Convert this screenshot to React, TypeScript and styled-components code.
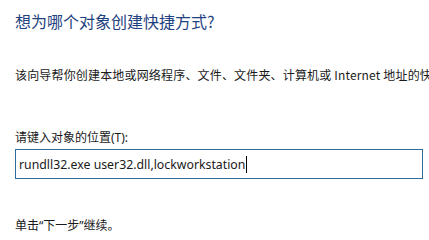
import styled, { createGlobalStyle } from "styled-components";

const GlobalStyle = createGlobalStyle`
  html, body {
    margin: 0;
    padding: 0;
    background: #ffffff;
  }
  body {
    font-family: "Noto Sans", "Noto Sans CJK SC", sans-serif;
  }
`;

const Page = styled.div`
  width: 429px;
  height: 234px;
  overflow: hidden;
  box-sizing: border-box;
  padding: 10px 6px 0 15px;
  display: flex;
  flex-direction: column;
`;

const Title = styled.h1`
  margin: 0;
  font-size: 16px;
  line-height: 22px;
  font-weight: normal;
  color: #1f4380;
  font-family: "Noto Sans CJK SC", sans-serif;
`;

const Intro = styled.p`
  margin: 35px 0 0;
  font-size: 12px;
  line-height: 16px;
  letter-spacing: 0.17px;
  color: #1a1a1a;
  white-space: nowrap;
  font-family: "Noto Sans CJK SC", sans-serif;
`;

const Field = styled.div`
  margin-top: 47px;
  display: flex;
  flex-direction: column;
  gap: 3px;
`;

const Label = styled.label`
  font-size: 12px;
  line-height: 16px;
  color: #1a1a1a;
  font-family: "Noto Sans", "Noto Sans CJK SC", sans-serif;
`;

const InputBox = styled.div`
  width: 408px;
  height: 30px;
  box-sizing: border-box;
  border: 1px solid #2f6e9a;
  display: flex;
  align-items: center;
  padding-left: 3px;
  font-size: 12.3px;
  color: #1a1a1a;
  font-family: "Noto Sans", sans-serif;
`;

const Caret = styled.span`
  display: inline-block;
  width: 1px;
  height: 17px;
  background: #000;
  margin-left: 1px;
`;

const Footer = styled.p`
  margin: 39px 0 0;
  font-size: 12px;
  line-height: 16px;
  color: #1a1a1a;
  font-family: "Noto Sans", "Noto Sans CJK SC", sans-serif;
`;

export default function App() {
  return (
    <>
      <GlobalStyle />
      <Page>
        <Title>想为哪个对象创建快捷方式?</Title>
        <Intro>该向导帮你创建本地或网络程序、文件、文件夹、计算机或 Internet 地址的快捷方式。</Intro>
        <Field>
          <Label>请键入对象的位置(T):</Label>
          <InputBox>
            rundll32.exe user32.dll,lockworkstation
            <Caret />
          </InputBox>
        </Field>
        <Footer>单击“下一步”继续。</Footer>
      </Page>
    </>
  );
}
